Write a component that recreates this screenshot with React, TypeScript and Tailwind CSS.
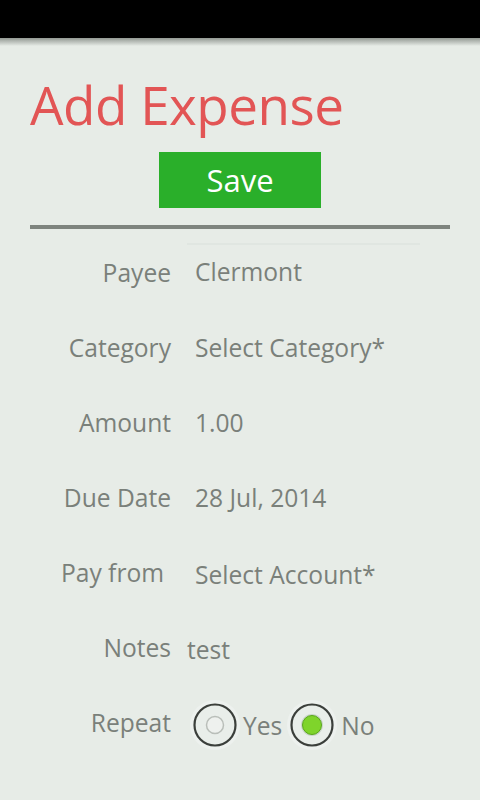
import React from "react";

const font = { fontFamily: '"Open Sans", "DejaVu Sans", sans-serif' };

function Row({
  label,
  value,
  labelClass = "",
  valueClass = "ml-[24px]",
}: {
  label: string;
  value: React.ReactNode;
  labelClass?: string;
  valueClass?: string;
}) {
  return (
    <div className="flex h-[75px] items-center">
      <div className={`w-[171px] shrink-0 text-right ${labelClass}`}>{label}</div>
      <div className={valueClass}>{value}</div>
    </div>
  );
}

function Radio({ checked }: { checked: boolean }) {
  return (
    <svg width="52" height="52" viewBox="0 0 52 52" className="shrink-0">
      <circle cx="26" cy="26" r="25" fill="#edf1ee" />
      <circle cx="26" cy="26" r="20.5" fill="#e9eeea" stroke="#3b3f3b" strokeWidth="2.2" />
      {checked ? (
        <>
          <circle cx="26" cy="26" r="11" fill="#c9d4c9" />
          <circle cx="26" cy="26" r="9.5" fill="#7fd42b" stroke="#5aa81a" strokeWidth="1" />
        </>
      ) : (
        <circle cx="26" cy="26" r="8.5" fill="#eef1ee" stroke="#b9beb9" strokeWidth="1.5" />
      )}
    </svg>
  );
}

export default function App() {
  return (
    <div className="min-h-[800px] w-[480px] overflow-hidden bg-[#e7ece7]" style={font}>
      <div className="h-[38px] bg-black" />
      <div className="h-[8px] bg-gradient-to-b from-[#939993] to-[#e7ece7]" />
      <div className="px-[30px]">
        <div className="mt-[24px] text-[53px] leading-[70px] tracking-[-0.5px] text-[#e25555]">
          Add Expense
        </div>
        <div className="mt-[12px] flex justify-center">
          <div className="flex h-[56px] w-[162px] items-center justify-center bg-[#2aaf2a] text-[31px] text-white">
            Save
          </div>
        </div>
        <div className="mt-[17px] h-[4px] bg-[#7e847e]" />
      </div>
      <div className="relative text-[24.6px] text-[#7a807a]">
        <div className="absolute left-[187px] top-[14px] h-[2px] w-[233px] bg-[#e0e6e1]" />
        <div className="h-[7px]" />
        <Row label="Payee" value="Clermont" valueClass="ml-[24px] -mt-[2px]" />
        <Row label="Category" value="Select Category*" />
        <Row label="Amount" value="1.00" />
        <Row label="Due Date" value="28 Jul, 2014" />
        <Row label="Pay from" value="Select Account*" labelClass="pr-[7px]" valueClass="ml-[24px] mt-[3px]" />
        <Row label="Notes" value="test" valueClass="ml-[16px] mt-[4px]" />
        <div className="flex h-[75px] items-center">
          <div className="w-[171px] shrink-0 text-right">Repeat</div>
          <div className="ml-[18px] mt-[2px] flex items-center">
            <Radio checked={false} />
            <span className="ml-[2px] mt-[4px]">Yes</span>
            <span className="ml-[4px]">
              <Radio checked={true} />
            </span>
            <span className="ml-[3px] mt-[4px]">No</span>
          </div>
        </div>
      </div>
    </div>
  );
}
